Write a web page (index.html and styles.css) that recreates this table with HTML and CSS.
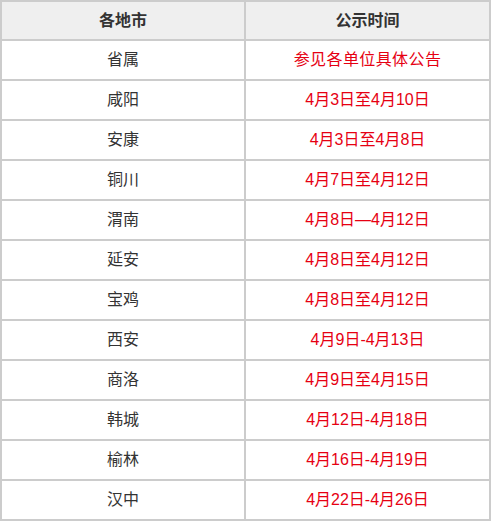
FILE: index.html
```html
<!DOCTYPE html>
<html lang="zh-CN">
<head>
<meta charset="utf-8">
<title>公示时间</title>
<link rel="stylesheet" href="styles.css">
</head>
<body>
<div class="table">
  <div class="cell head">各地市</div>
  <div class="cell head">公示时间</div>

  <div class="cell city">省属</div>
  <div class="cell date wide">参见各单位具体公告</div>

  <div class="cell city">咸阳</div>
  <div class="cell date">4月3日至4月10日</div>

  <div class="cell city">安康</div>
  <div class="cell date">4月3日至4月8日</div>

  <div class="cell city">铜川</div>
  <div class="cell date">4月7日至4月12日</div>

  <div class="cell city">渭南</div>
  <div class="cell date">4月8日—4月12日</div>

  <div class="cell city">延安</div>
  <div class="cell date">4月8日至4月12日</div>

  <div class="cell city">宝鸡</div>
  <div class="cell date">4月8日至4月12日</div>

  <div class="cell city">西安</div>
  <div class="cell date">4月9日-4月13日</div>

  <div class="cell city">商洛</div>
  <div class="cell date">4月9日至4月15日</div>

  <div class="cell city">韩城</div>
  <div class="cell date">4月12日-4月18日</div>

  <div class="cell city">榆林</div>
  <div class="cell date">4月16日-4月19日</div>

  <div class="cell city">汉中</div>
  <div class="cell date">4月22日-4月26日</div>
</div>
</body>
</html>
```

FILE: styles.css
```css
html, body {
  margin: 0;
  padding: 0;
  background: #ffffff;
}

body {
  font-family: "Liberation Sans", "Noto Sans CJK SC", sans-serif;
  font-size: 16px;
  color: #333333;
}

.table {
  width: 491px;
  box-sizing: border-box;
  display: grid;
  grid-template-columns: 244px 245px;
  grid-template-rows: 39px;
  grid-auto-rows: 40px;
  border-left: 2px solid #cccccc;
  border-top: 2px solid #cccccc;
}

.cell {
  box-sizing: border-box;
  border-right: 2px solid #cccccc;
  border-bottom: 2px solid #cccccc;
  display: flex;
  align-items: center;
  justify-content: center;
  line-height: 1;
}

.head {
  background: #efefef;
  font-weight: bold;
  color: #333333;
  font-size: 16px;
  padding-top: 1px;
}

.city {
  color: #333333;
}

.date {
  color: #e60012;
}

.wide {
  letter-spacing: 0.4px;
}
```
